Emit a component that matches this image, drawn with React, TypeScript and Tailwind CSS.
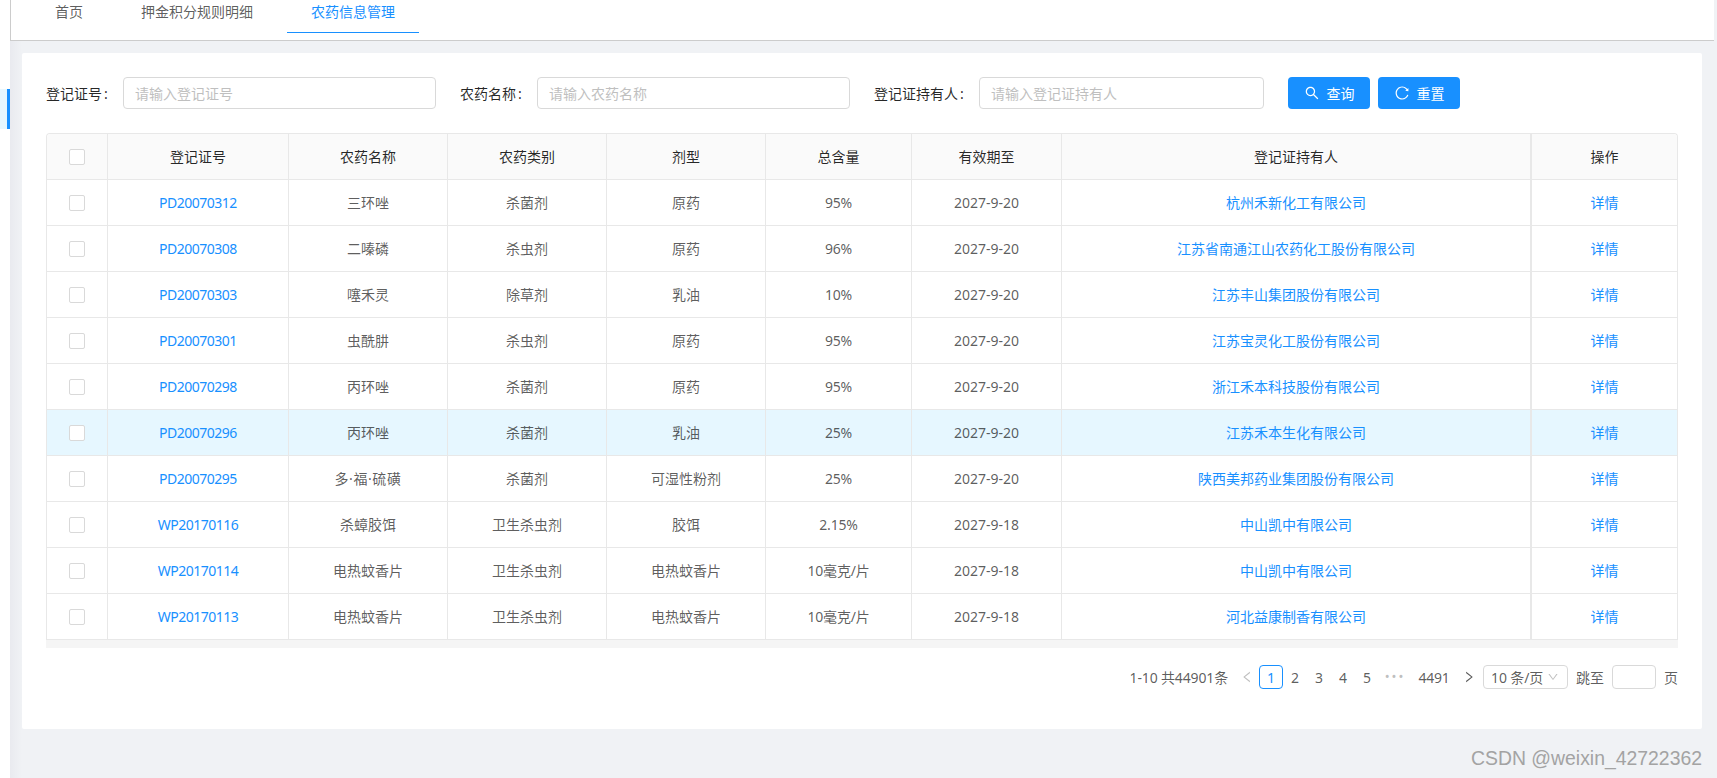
import React from "react";
import { AiOutlineSearch, AiOutlineReload, AiOutlineLeft, AiOutlineRight, AiOutlineDown } from "react-icons/ai";

const rows = [
  ["PD20070312", "三环唑", "杀菌剂", "原药", "95%", "2027-9-20", "杭州禾新化工有限公司"],
  ["PD20070308", "二嗪磷", "杀虫剂", "原药", "96%", "2027-9-20", "江苏省南通江山农药化工股份有限公司"],
  ["PD20070303", "噻禾灵", "除草剂", "乳油", "10%", "2027-9-20", "江苏丰山集团股份有限公司"],
  ["PD20070301", "虫酰肼", "杀虫剂", "原药", "95%", "2027-9-20", "江苏宝灵化工股份有限公司"],
  ["PD20070298", "丙环唑", "杀菌剂", "原药", "95%", "2027-9-20", "浙江禾本科技股份有限公司"],
  ["PD20070296", "丙环唑", "杀菌剂", "乳油", "25%", "2027-9-20", "江苏禾本生化有限公司"],
  ["PD20070295", "多·福·硫磺", "杀菌剂", "可湿性粉剂", "25%", "2027-9-20", "陕西美邦药业集团股份有限公司"],
  ["WP20170116", "杀蟑胶饵", "卫生杀虫剂", "胶饵", "2.15%", "2027-9-18", "中山凯中有限公司"],
  ["WP20170114", "电热蚊香片", "卫生杀虫剂", "电热蚊香片", "10毫克/片", "2027-9-18", "中山凯中有限公司"],
  ["WP20170113", "电热蚊香片", "卫生杀虫剂", "电热蚊香片", "10毫克/片", "2027-9-18", "河北益康制香有限公司"],
];

const gridCols = "grid h-[46px] grid-cols-[61px_181px_159px_159px_159px_146px_150px_470px_145px] border-b border-[#e8e8e8]";
const cell = "flex items-center justify-center border-r border-[#e8e8e8]";

function Box() {
  return <span className="block h-[16px] w-[16px] rounded-[2px] border border-[#d9d9d9] bg-white" />;
}

function Field({ label, width, inputWidth, placeholder }: { label: string; width: string; inputWidth: string; placeholder: string }) {
  return (
    <div className="flex items-center gap-[16px]">
      <label className={`${width} whitespace-nowrap text-[rgba(0,0,0,0.85)]`}>{label}<span className="ml-[2px] tracking-[-1px]">:</span></label>
      <input
        placeholder={placeholder}
        className={`${inputWidth} h-[32px] rounded-[4px] border border-[#d9d9d9] bg-white px-[11px] text-[14px] outline-none placeholder:text-[#bfbfbf]`}
      />
    </div>
  );
}

export default function App() {
  return (
    <div className="flex h-[778px] w-[1717px] overflow-hidden bg-[#f0f2f5] font-['Noto_Sans','Noto_Sans_CJK_SC',sans-serif] text-[14px] text-[rgba(0,0,0,0.65)]">
      <aside className="w-[10px] shrink-0 bg-white pt-[89px]">
        <div className="h-[40px] border-r-[3px] border-[#1890ff] bg-[#e6f7ff]" />
      </aside>

      <main className="flex w-[1704px] shrink-0 flex-col bg-[linear-gradient(90deg,#e9eaef,#f0f2f5_12px)]">
        <header className="flex h-[41px] shrink-0 gap-[10px] border-b border-l border-[#cccccc] bg-white pl-[20px]">
          <div className="h-[33px] px-[24px] leading-[24px]">首页</div>
          <div className="h-[33px] px-[24px] leading-[24px]">押金积分规则明细</div>
          <div className="h-[33px] border-b border-[#1890ff] px-[24px] leading-[24px] text-[#1890ff]">农药信息管理</div>
        </header>

        <section className="ml-[12px] mt-[12px] h-[676px] w-[1680px] shrink-0 rounded-[2px] bg-white px-[24px] pt-[24px]">
          <div className="flex h-[32px] items-center">
            <Field label="登记证号" width="w-[61px]" inputWidth="w-[313px]" placeholder="请输入登记证号" />
            <div className="ml-[24px]"><Field label="农药名称" width="w-[61px]" inputWidth="w-[313px]" placeholder="请输入农药名称" /></div>
            <div className="ml-[24px]"><Field label="登记证持有人" width="w-[89px]" inputWidth="w-[285px]" placeholder="请输入登记证持有人" /></div>
            <button className="ml-[24px] flex h-[32px] w-[82px] items-center justify-center gap-[7px] rounded-[4px] bg-[#1890ff] text-white">
              <AiOutlineSearch className="text-[16px]" />查询
            </button>
            <button className="ml-[8px] flex h-[32px] w-[82px] items-center justify-center gap-[7px] rounded-[4px] bg-[#1890ff] text-white">
              <AiOutlineReload className="text-[16px]" />重置
            </button>
          </div>

          <div className="mt-[24px] w-[1632px] rounded-t-[4px] border-x border-t border-[#e8e8e8]">
            <div className={`${gridCols} rounded-t-[4px] bg-[#fafafa] text-[rgba(0,0,0,0.85)]`}>
              <div className={cell}><Box /></div>
              <div className={cell}>登记证号</div>
              <div className={cell}>农药名称</div>
              <div className={cell}>农药类别</div>
              <div className={cell}>剂型</div>
              <div className={cell}>总含量</div>
              <div className={cell}>有效期至</div>
              <div className={`${cell} border-r-2`}>登记证持有人</div>
              <div className="flex items-center justify-center">操作</div>
            </div>
            {rows.map((r, i) => (
              <div key={r[0]} className={`${gridCols} ${i === 5 ? "bg-[#e6f7ff]" : "bg-white"}`}>
                <div className={cell}><Box /></div>
                <div className={`${cell} tracking-[-0.5px] text-[#1890ff]`}>{r[0]}</div>
                <div className={`${cell} ${i === 6 ? "tracking-[0.6px]" : ""}`}>{r[1]}</div>
                <div className={cell}>{r[2]}</div>
                <div className={cell}>{r[3]}</div>
                <div className={`${cell} tracking-[-0.2px]`}>{r[4]}</div>
                <div className={cell}>{r[5]}</div>
                <div className={`${cell} border-r-2 text-[#1890ff]`}>{r[6]}</div>
                <div className="flex items-center justify-center text-[#1890ff]">详情</div>
              </div>
            ))}
          </div>
          <div className="h-[8px] w-[1632px] bg-[#f5f5f5]" />

          <div className="mt-[17px] flex h-[24px] w-[1632px] items-center justify-end">
            <span className="mr-[7px] tracking-[-0.15px]">1-10 共44901条</span>
            <span className="flex h-[24px] w-[24px] items-center justify-center text-[14px] text-[#bfbfbf]"><AiOutlineLeft /></span>
            <span className="flex h-[24px] w-[24px] items-center justify-center rounded-[4px] border border-[#1890ff] text-[#1890ff]">1</span>
            <span className="flex h-[24px] w-[24px] items-center justify-center">2</span>
            <span className="flex h-[24px] w-[24px] items-center justify-center">3</span>
            <span className="flex h-[24px] w-[24px] items-center justify-center">4</span>
            <span className="flex h-[24px] w-[24px] items-center justify-center">5</span>
            <span className="flex h-[24px] w-[32px] items-center justify-center text-[13px] tracking-[2px] text-[#bfbfbf]">•••</span>
            <span className="flex h-[24px] w-[46px] items-center justify-center tracking-[-0.3px]">4491</span>
            <span className="flex h-[24px] w-[24px] items-center justify-center text-[14px]"><AiOutlineRight /></span>
            <div className="ml-[2px] flex h-[24px] w-[85px] items-center justify-between rounded-[4px] border border-[#d9d9d9] pl-[7px] pr-[8px]">
              <span className="whitespace-nowrap tracking-[-0.1px]">10 条/页</span>
              <AiOutlineDown className="text-[12px] text-[#bfbfbf]" />
            </div>
            <span className="ml-[8px]">跳至</span>
            <input className="mx-[8px] h-[24px] w-[44px] rounded-[4px] border border-[#d9d9d9] bg-white outline-none" />
            <span>页</span>
          </div>
        </section>

        <div className="mt-[17px] flex w-[1692px] justify-end font-['Liberation_Sans',sans-serif] text-[19.4px] leading-[24px] text-[#a3a3a3]">
          CSDN @weixin_42722362
        </div>
      </main>
    </div>
  );
}
